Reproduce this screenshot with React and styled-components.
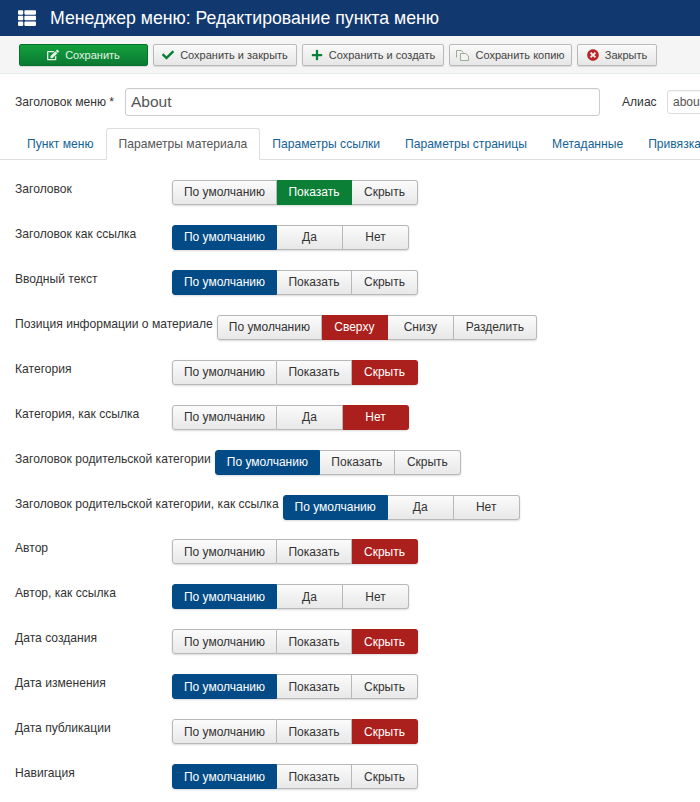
import React from "react"
import styled, { createGlobalStyle } from "styled-components"
import { FaCheck, FaPlus, FaTimesCircle, FaEdit, FaThList } from "react-icons/fa"

const GlobalStyle = createGlobalStyle`
  html, body {
    margin: 0;
    padding: 0;
    background: #fff;
    overflow: hidden;
  }
  body {
    font-family: "Liberation Sans", Arial, sans-serif;
    font-size: 12px;
    color: #333;
  }
`

const rows = [
  { label: "Заголовок", options: ["По умолчанию", "Показать", "Скрыть"], active: 1, tone: "green" },
  { label: "Заголовок как ссылка", options: ["По умолчанию", "Да", "Нет"], active: 0, tone: "blue" },
  { label: "Вводный текст", options: ["По умолчанию", "Показать", "Скрыть"], active: 0, tone: "blue" },
  { label: "Позиция информации о материале", options: ["По умолчанию", "Сверху", "Снизу", "Разделить"], active: 1, tone: "red" },
  { label: "Категория", options: ["По умолчанию", "Показать", "Скрыть"], active: 2, tone: "red" },
  { label: "Категория, как ссылка", options: ["По умолчанию", "Да", "Нет"], active: 2, tone: "red" },
  { label: "Заголовок родительской категории", options: ["По умолчанию", "Показать", "Скрыть"], active: 0, tone: "blue" },
  { label: "Заголовок родительской категории, как ссылка", options: ["По умолчанию", "Да", "Нет"], active: 0, tone: "blue" },
  { label: "Автор", options: ["По умолчанию", "Показать", "Скрыть"], active: 2, tone: "red" },
  { label: "Автор, как ссылка", options: ["По умолчанию", "Да", "Нет"], active: 0, tone: "blue" },
  { label: "Дата создания", options: ["По умолчанию", "Показать", "Скрыть"], active: 2, tone: "red" },
  { label: "Дата изменения", options: ["По умолчанию", "Показать", "Скрыть"], active: 0, tone: "blue" },
  { label: "Дата публикации", options: ["По умолчанию", "Показать", "Скрыть"], active: 2, tone: "red" },
  { label: "Навигация", options: ["По умолчанию", "Показать", "Скрыть"], active: 0, tone: "blue" },
]

const optionWidths = {
  "По умолчанию": 105,
  "Показать": 75,
  "Скрыть": 66,
  "Да": 66,
  "Нет": 66,
  "Сверху": 66,
  "Снизу": 66,
  "Разделить": 83,
}

const tabs = ["Пункт меню", "Параметры материала", "Параметры ссылки", "Параметры страницы", "Метаданные", "Привязка"]

const tones = {
  green: "#0b7f35",
  blue: "#034b86",
  red: "#ab1f1c",
}

const Page = styled.div`
  width: 700px;
  height: 802px;
  overflow: hidden;
`

const Header = styled.header`
  height: 36px;
  background: #11386f;
  display: flex;
  align-items: center;
  padding-left: 18px;
  gap: 14px;
  color: #fff;
  svg {
    font-size: 18px;
  }
`

const Title = styled.h1`
  margin: 0;
  font-size: 17.7px;
  font-weight: normal;
  white-space: nowrap;
`

const Toolbar = styled.div`
  height: 38px;
  box-sizing: border-box;
  background: #f5f5f5;
  border-bottom: 1px solid #e6ecee;
  display: flex;
  align-items: flex-start;
  padding: 8px 0 0 19px;
  gap: 5px;
`

const ToolButton = styled.button`
  height: 22px;
  width: ${p => p.$width}px;
  box-sizing: border-box;
  padding: 0;
  display: flex;
  align-items: center;
  justify-content: center;
  gap: 6px;
  font: 11px "Liberation Sans", Arial, sans-serif;
  border-radius: 2px;
  color: ${p => (p.$primary ? "#e4f3e6" : "#444")};
  background: ${p => (p.$primary ? "linear-gradient(#13a03c, #0a7a32)" : "linear-gradient(#fafafa, #e6e6e6)")};
  border: 1px solid ${p => (p.$primary ? "#0a6e2c" : "#bbb")};
  box-shadow: 0 1px 1px rgba(0, 0, 0, 0.12);
  svg {
    font-size: 12px;
    color: ${p => p.$iconColor || "inherit"};
  }
`

const TitleRow = styled.div`
  display: flex;
  align-items: center;
  margin-top: 14px;
  padding-left: 15px;
`

const FieldLabel = styled.label`
  font-size: 12.1px;
  white-space: nowrap;
  flex: none;
`

const TitleLabel = styled(FieldLabel)`
  width: 110px;
`

const AliasLabel = styled(FieldLabel)`
  margin-left: 22px;
  width: 45px;
`

const TitleInput = styled.input`
  box-sizing: border-box;
  flex: none;
  height: 28px;
  border: 1px solid #ccc;
  border-radius: 3px;
  color: #555;
  font-family: "Liberation Sans", Arial, sans-serif;
  background: #fff;
  outline: none;
  padding: 0 5px;
  box-shadow: inset 0 1px 1px rgba(0, 0, 0, 0.04);
`

const MainInput = styled(TitleInput)`
  width: 475px;
  font-size: 15.5px;
`

const AliasInput = styled(TitleInput)`
  width: 60px;
  height: 24px;
  font-size: 12px;
  border-color: #ddd;
`

const TabBar = styled.nav`
  display: flex;
  margin-top: 12px;
  padding-left: 14.5px;
  height: 32px;
  box-sizing: border-box;
  border-bottom: 1px solid #ddd;
  white-space: nowrap;
`

const Tab = styled.a`
  box-sizing: border-box;
  height: 32px;
  flex: none;
  display: flex;
  align-items: center;
  padding: 0 11.5px;
  font-size: 12.1px;
  color: ${p => (p.$active ? "#555" : "#146295")};
  background: ${p => (p.$active ? "#fff" : "transparent")};
  border: 1px solid ${p => (p.$active ? "#ddd" : "transparent")};
  border-bottom-color: ${p => (p.$active ? "#fff" : "transparent")};
  border-radius: 3px 3px 0 0;
`

const Form = styled.div`
  padding: 19.95px 0 0 15px;
  display: flex;
  flex-direction: column;
  gap: 20px;
`

const Row = styled.div`
  display: flex;
  align-items: flex-start;
  height: 24.94px;
`

const RowLabel = styled(FieldLabel)`
  box-sizing: border-box;
  min-width: 157px;
  padding: 1px 4px 0 0;
  line-height: 16px;
`

const Group = styled.div`
  display: flex;
  border-radius: 3px;
  box-shadow: 0 1px 2px rgba(0, 0, 0, 0.15);
`

const Option = styled.button`
  box-sizing: border-box;
  width: ${p => p.$width}px;
  height: 25px;
  padding: 0;
  font: 12px "Liberation Sans", Arial, sans-serif;
  color: ${p => (p.$tone ? "#fff" : "#333")};
  background: ${p => (p.$tone ? tones[p.$tone] : "linear-gradient(#fbfbfb, #e8e8e8)")};
  border: 1px solid ${p => (p.$tone ? tones[p.$tone] : "#b8b8b8")};
  border-left-width: 0;
  &:first-child {
    border-left-width: 1px;
    border-radius: 3px 0 0 3px;
  }
  &:last-child {
    border-radius: 0 3px 3px 0;
  }
`

const CopyIcon = () => (
  <svg width="13" height="11" viewBox="0 0 13 11" fill="none" stroke="currentColor" strokeWidth="1">
    <path d="M0.5 7.5V0.5H5.5L7.5 2.5" />
    <path d="M4.5 3.5H9.5L12.5 6V10.5H4.5Z" fill="#f3f3f3" />
  </svg>
)

export default function App() {
  return (
    <Page>
      <GlobalStyle />
      <Header>
        <FaThList />
        <Title>Менеджер меню: Редактирование пункта меню</Title>
      </Header>
      <Toolbar>
        <ToolButton $primary $width={129}><FaEdit />Сохранить</ToolButton>
        <ToolButton $width={144} $iconColor="#0b7f35"><FaCheck />Сохранить и закрыть</ToolButton>
        <ToolButton $width={142} $iconColor="#0b7f35"><FaPlus />Сохранить и создать</ToolButton>
        <ToolButton $width={123} $iconColor="#9aae92"><CopyIcon />Сохранить копию</ToolButton>
        <ToolButton $width={80} $iconColor="#b8282a"><FaTimesCircle />Закрыть</ToolButton>
      </Toolbar>
      <TitleRow>
        <TitleLabel>Заголовок меню *</TitleLabel>
        <MainInput defaultValue="About" />
        <AliasLabel>Алиас</AliasLabel>
        <AliasInput defaultValue="about" />
      </TitleRow>
      <TabBar>
        {tabs.map((tab, i) => (
          <Tab key={tab} $active={i === 1}>{tab}</Tab>
        ))}
      </TabBar>
      <Form>
        {rows.map(row => (
          <Row key={row.label}>
            <RowLabel>{row.label}</RowLabel>
            <Group>
              {row.options.map((opt, i) => (
                <Option key={opt} $width={optionWidths[opt]} $tone={i === row.active ? row.tone : null}>{opt}</Option>
              ))}
            </Group>
          </Row>
        ))}
      </Form>
    </Page>
  )
}
